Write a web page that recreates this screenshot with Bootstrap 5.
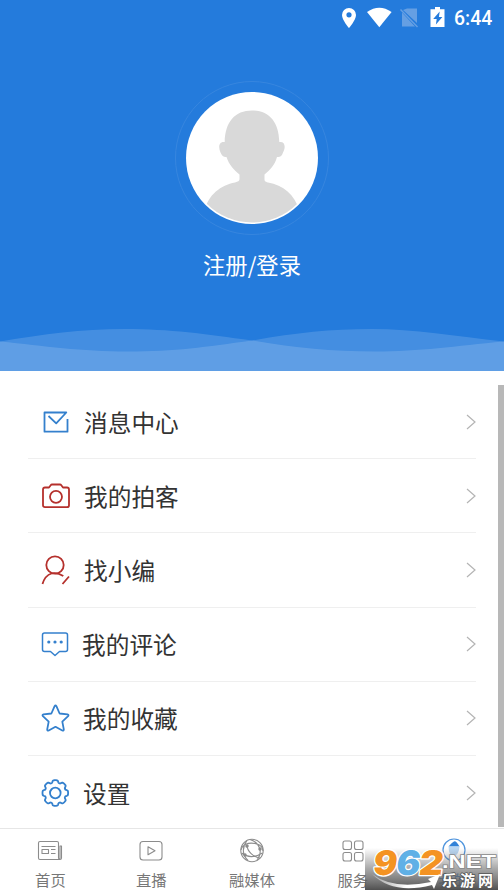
<!DOCTYPE html>
<html lang="zh-CN">
<head>
    <meta charset="UTF-8">
    <meta name="viewport" content="width=device-width, initial-scale=1.0">
    <title>我的</title>
    <link href="https://cdn.jsdelivr.net/npm/bootstrap@5.3.0/dist/css/bootstrap.min.css" rel="stylesheet">
    <style>
        body {
            font-family: "Noto Sans CJK SC", sans-serif;
            height: 896px;
            overflow: hidden;
            background-color: #fff;
        }
        svg {
            display: block;
            flex-shrink: 0;
        }
        .profile-header {
            height: 371px;
            background-color: #247bdc;
        }
        .status-bar {
            height: 36px;
            padding-right: 10px;
        }
        .clock {
            font: 500 19.4px/37px Roboto, sans-serif;
            width: 40px;
            margin-left: 7px;
            white-space: nowrap;
        }
        .avatar {
            margin-top: 44px;
        }
        .login-link {
            font-size: 22.3px;
            line-height: 32px;
            margin-top: 12px;
        }
        .menu-area {
            height: 442px;
            margin-top: 14px;
        }
        .menu-list {
            width: 448px;
            margin-left: 28px;
        }
        .menu-item {
            height: 74.2px;
            padding-left: 12px;
            border-bottom: 1px solid #efefef;
        }
        .menu-item:last-child {
            border-bottom: 0;
        }
        .menu-label {
            font-size: 23.7px;
            line-height: 34px;
            margin-left: 14px;
            color: #333;
        }
        .shift-left {
            margin-left: 12px;
        }
        .shift-half {
            margin-left: 13px;
        }
        .ico {
            fill: none;
            stroke: #3480cd;
            stroke-width: 1.8;
            stroke-linejoin: round;
        }
        .ico-red {
            stroke: #b5302c;
        }
        .arrow {
            fill: none;
            stroke: #b4b4b4;
            stroke-width: 1.2;
        }
        .scroll-thumb {
            width: 6px;
            background-color: #b8b8b8;
        }
        .tab-bar {
            height: 68px;
            margin-top: 1px;
            border-top: 1px solid #e6e6e6;
        }
        .tab-item {
            width: 100.8px;
            padding-top: 8px;
            font-size: 15.3px;
            line-height: 22px;
            color: #777;
        }
        .tab-item span {
            margin-top: 3px;
        }
        .tab-ico {
            fill: none;
            stroke: #8c8c8c;
            stroke-width: 1.1;
            stroke-linejoin: round;
        }
        .tab-active {
            color: #247bdc;
        }
        .site-badge {
            left: 365px;
            top: 846px;
        }
        .badge-num {
            font: 900 34px Inter, "Liberation Sans", sans-serif;
            paint-order: stroke;
            stroke: #fff;
            stroke-width: 2.5px;
            stroke-linejoin: round;
        }
        .badge-net {
            font: bold 19px "Liberation Sans", sans-serif;
            fill: #fff;
            paint-order: stroke;
            stroke: #888;
            stroke-width: 1.5px;
        }
        .badge-name {
            font: bold 15px "Noto Sans CJK SC", sans-serif;
            fill: #fff;
            paint-order: stroke;
            stroke: #555;
            stroke-width: 1.5px;
        }
    </style>
</head>
<body>
    <!-- Header -->
    <header class="profile-header d-flex flex-column align-items-center text-white">
        <div class="status-bar d-flex align-items-center justify-content-end w-100">
            <svg width="106" height="36" viewBox="0 0 106 36" fill="#fff">
                <path fill-rule="evenodd" d="M8 8a7 7 0 0 0-7 7c0 5 7 13 7 13s7-8 7-13a7 7 0 0 0-7-7zM8 12.200a2.600 2.600 0 1 1 0 5.200 2.600 2.600 0 0 1 0-5.200z"/>
                <path d="M26 12Q38.300 3.500 50.600 12L38.300 27.200z"/>
                <path fill="#659fe3" d="M66 8.500h10v14.500L62 10zM61 12.500 74 26.500H61z"/>
                <path d="M59.500 9.500 76.500 27" stroke="#659fe3" stroke-width="1.400"/>
                <path fill-rule="evenodd" d="M94 7h5v2.200h4.500V27h-14V9.200H94zM98.700 11.500l-6.500 7.500h3.500l-.8 5.500 6.500-7.500h-3.500z"/>
            </svg>
            <div class="clock">6:44</div>
        </div>
        <svg class="avatar" width="156" height="156" viewBox="174 80 156 156">
            <defs>
                <clipPath id="face"><circle cx="252" cy="158" r="64.500"/></clipPath>
            </defs>
            <circle cx="252" cy="158" r="76.500" fill="none" stroke="#3786df"/>
            <circle cx="252" cy="158" r="66" fill="#fff"/>
            <g fill="#d9d9d9" clip-path="url(#face)">
                <path d="M252 110.500C235 110.500 225 122 224.700 142C219 141 218 147 220.500 152.500C222 156 224 157.500 226.500 157C229 165 234 170 239.500 174.500V179C239.500 181 238 181.500 235 182.500C221 185 208 195 205 210V226H299V210C295 195 283 185 268 182.500C265 181.500 264.500 181 264.500 179V174.500C270 170 275 165 277 157C280 157.500 282 156 283 152.500C286 147 285 141 279.300 142C279 122 269 110.500 252 110.500z"/>
            </g>
        </svg>
        <div class="login-link">注册/登录</div>
        <svg class="mt-auto" width="504" height="45" viewBox="0 326 504 45">
            <path fill="#fff" fill-opacity=".15" d="M0 341.500C45 334 80 329 125 329S205 334 252 340.500C295 333 330 329 372 329S455 336 504 341.500V371H0z"/>
            <path fill="#fff" fill-opacity=".15" d="M0 341.500C45 346 80 351.500 128 351.500S205 347 252 340.500C295 348 330 351.500 375 351.500S455 346 504 341.500V371H0z"/>
        </svg>
    </header>

    <!-- Menu -->
    <main class="menu-area d-flex justify-content-between">
        <div class="menu-list">
            <div class="menu-item d-flex align-items-center">
                <svg class="ico" width="30" height="30" viewBox="0 0 30 30">
                    <path d="M27.500 12v12.700H4.500V5.500h21.800L16.200 16.300 8.500 9"/>
                </svg>
                <div class="menu-label">消息中心</div>
                <svg class="arrow ms-auto" width="10" height="16" viewBox="0 0 10 16"><path d="M1 1l8 7-8 7"/></svg>
            </div>
            <div class="menu-item d-flex align-items-center">
                <svg class="ico ico-red" width="30" height="30" viewBox="0 0 30 30">
                    <path d="M5 6.500h4l1.700-2.300q.5-.7 1.300-.7h8q.8 0 1.300.7L23 6.500h4q2 0 2 2v15.700q0 2-2 2H5q-2 0-2-2V8.500q0-2 2-2z"/>
                    <circle cx="16" cy="15.800" r="6"/>
                </svg>
                <div class="menu-label">我的拍客</div>
                <svg class="arrow ms-auto" width="10" height="16" viewBox="0 0 10 16"><path d="M1 1l8 7-8 7"/></svg>
            </div>
            <div class="menu-item d-flex align-items-center">
                <svg class="ico ico-red" width="30" height="30" viewBox="0 0 30 30">
                    <circle cx="15" cy="10" r="8.700"/>
                    <path d="M2.500 29Q5 20.500 11.500 18.500Q17 17 23.300 21M29 21.500l-6.500 7.500"/>
                </svg>
                <div class="menu-label">找小编</div>
                <svg class="arrow ms-auto" width="10" height="16" viewBox="0 0 10 16"><path d="M1 1l8 7-8 7"/></svg>
            </div>
            <div class="menu-item d-flex align-items-center">
                <svg class="ico" width="30" height="30" viewBox="0 0 30 30">
                    <path stroke-width="1.500" d="M4.500 4h21q2 0 2 2v14.500q0 2-2 2h-6L15 26.500l-4.500-4h-6q-2 0-2-2V6q0-2 2-2z"/>
                    <g fill="#3480cd" stroke="none"><circle cx="8.800" cy="13" r="1.600"/><circle cx="15" cy="13" r="1.600"/><circle cx="21.200" cy="13" r="1.600"/></g>
                </svg>
                <div class="menu-label shift-left">我的评论</div>
                <svg class="arrow ms-auto" width="10" height="16" viewBox="0 0 10 16"><path d="M1 1l8 7-8 7"/></svg>
            </div>
            <div class="menu-item d-flex align-items-center">
                <svg class="ico" width="30" height="30" viewBox="0 0 30 30">
                    <path d="M14.600 3.200q.9-1.500 1.800 0l3.200 7.300 7.900.9q1.600.4.600 1.700l-5.800 5.500 1.500 7.800q0 1.600-1.500 1.100l-6.800-3.700-6.800 3.700q-1.500.5-1.500-1.100l1.500-7.800-5.800-5.500q-1-1.300.6-1.700l7.900-.9z"/>
                </svg>
                <div class="menu-label shift-half">我的收藏</div>
                <svg class="arrow ms-auto" width="10" height="16" viewBox="0 0 10 16"><path d="M1 1l8 7-8 7"/></svg>
            </div>
            <div class="menu-item d-flex align-items-center">
                <svg class="ico" width="30" height="30" viewBox="0 0 30 30">
                    <g id="gear"></g>
                    <circle cx="15.300" cy="15" r="5.300"/>
                </svg>
                <div class="menu-label shift-half">设置</div>
                <svg class="arrow ms-auto" width="10" height="16" viewBox="0 0 10 16"><path d="M1 1l8 7-8 7"/></svg>
            </div>
        </div>
        <div class="scroll-thumb"></div>
    </main>

    <!-- Tab bar -->
    <nav class="tab-bar d-flex">
        <div class="tab-item d-flex flex-column align-items-center">
            <svg class="tab-ico" width="26" height="28" viewBox="0 0 26 28">
                <path d="M23 9v12q0 1.500-1.500 1.500H3q-1.500 0-1.500-1.500V6Q1.500 4.500 3 4.500h17q1.500 0 1.500 1.500v15q0 1.500 1.500 1.500 1.500 0 1.500-1.500V9zM4.500 9.500h14M5 12.500h6.500v4H5zM14 12.500h4.500M14 16.500h4.500"/>
            </svg>
            <span>首页</span>
        </div>
        <div class="tab-item d-flex flex-column align-items-center">
            <svg class="tab-ico" width="26" height="28" viewBox="0 0 26 28">
                <rect x="2" y="4.500" width="22" height="18.500" rx="3"/>
                <path d="M10 9.800v8l7-4z"/>
            </svg>
            <span>直播</span>
        </div>
        <div class="tab-item d-flex flex-column align-items-center">
            <svg class="tab-ico" width="26" height="28" viewBox="0 0 26 28">
                <circle cx="13" cy="13.500" r="11.200"/>
                <path d="M2 13C3 8 9 5 16 6.500S23.500 11 24 14M11 2.500C16 4 20 8 21 13S20 20 18 23M8 3.500C3 10 3 18 9 23.500M2.500 16C9 21 17 20 23.500 16M8 8C8 14 14 20 21 21"/>
                <circle cx="8" cy="9" r="1.200" fill="#858585"/><circle cx="21" cy="12" r="1.200" fill="#858585"/><circle cx="6" cy="18" r="1.200" fill="#858585"/>
            </svg>
            <span>融媒体</span>
        </div>
        <div class="tab-item d-flex flex-column align-items-center">
            <svg class="tab-ico" width="26" height="28" viewBox="0 0 26 28">
                <rect x="3" y="4" width="8.500" height="8.500" rx="2"/><rect x="14.500" y="4" width="8.500" height="8.500" rx="2"/>
                <rect x="3" y="15.500" width="8.500" height="8.500" rx="2"/><rect x="14.500" y="15.500" width="8.500" height="8.500" rx="2"/>
            </svg>
            <span>服务</span>
        </div>
        <div class="tab-item tab-active d-flex flex-column align-items-center">
            <svg width="26" height="28" viewBox="0 0 26 28">
                <circle cx="13" cy="13" r="11" fill="none" stroke="#4e94dd" stroke-width="1.200"/>
                <path fill="#3182d8" d="M7.500 9.500Q11 5.500 13 4.500T18.500 9.500z"/>
                <path fill="#b9d7f3" d="M7.500 9.500h11Q18 18 13 19T7.500 9.500z"/>
            </svg>
            <span>我的</span>
        </div>
    </nav>

    <!-- Site badge over the tab bar -->
    <svg class="site-badge position-absolute" width="136" height="46" viewBox="0 0 136 46">
        <defs>
            <linearGradient id="shade" x1="0" y1="0" x2="0" y2="1">
                <stop offset="0" stop-color="#777" stop-opacity="0"/>
                <stop offset=".5" stop-color="#777" stop-opacity=".65"/>
                <stop offset="1" stop-color="#505050" stop-opacity="1"/>
            </linearGradient>
            <linearGradient id="swoosh"><stop offset="0" stop-color="#fff" stop-opacity=".3"/><stop offset=".5" stop-color="#fff"/></linearGradient>
        </defs>
        <rect y="2" width="133" height="42" fill="url(#shade)"/>
        <g class="badge-num" transform="translate(4 0) skewX(-8)">
            <text x="7" y="29" textLength="24" lengthAdjust="spacingAndGlyphs" fill="#f49323">9</text>
            <text x="30" y="29" textLength="24" lengthAdjust="spacingAndGlyphs" fill="#5fb0e6">6</text>
            <text x="53" y="29" textLength="24" lengthAdjust="spacingAndGlyphs" fill="#f49323">2</text>
        </g>
        <text class="badge-net" x="77" y="22" textLength="54" lengthAdjust="spacingAndGlyphs">.NET</text>
        <path fill="url(#swoosh)" d="M7 28Q28 44 66 36L63 33 75 28 69 43 67 39Q28 49 7 28z"/>
        <text class="badge-name" x="77" y="40" textLength="51">乐游网</text>
    </svg>

    <script src="https://cdn.jsdelivr.net/npm/bootstrap@5.3.0/dist/js/bootstrap.bundle.min.js"></script>
    <script>
        // Gear outline with eight soft teeth
        const points = [];
        for (let i = 0; i < 160; i++) {
            const a = i / 160 * Math.PI * 2;
            const r = 11.6 + 1.2 * Math.tanh(2.5 * Math.cos(8 * a) + 1);
            points.push((15.3 + r * Math.cos(a)).toFixed(2) + ',' + (15 + r * Math.sin(a)).toFixed(2));
        }
        document.getElementById('gear').innerHTML = `<polygon points="${points.join(' ')}"/>`;
    </script>
</body>
</html>
